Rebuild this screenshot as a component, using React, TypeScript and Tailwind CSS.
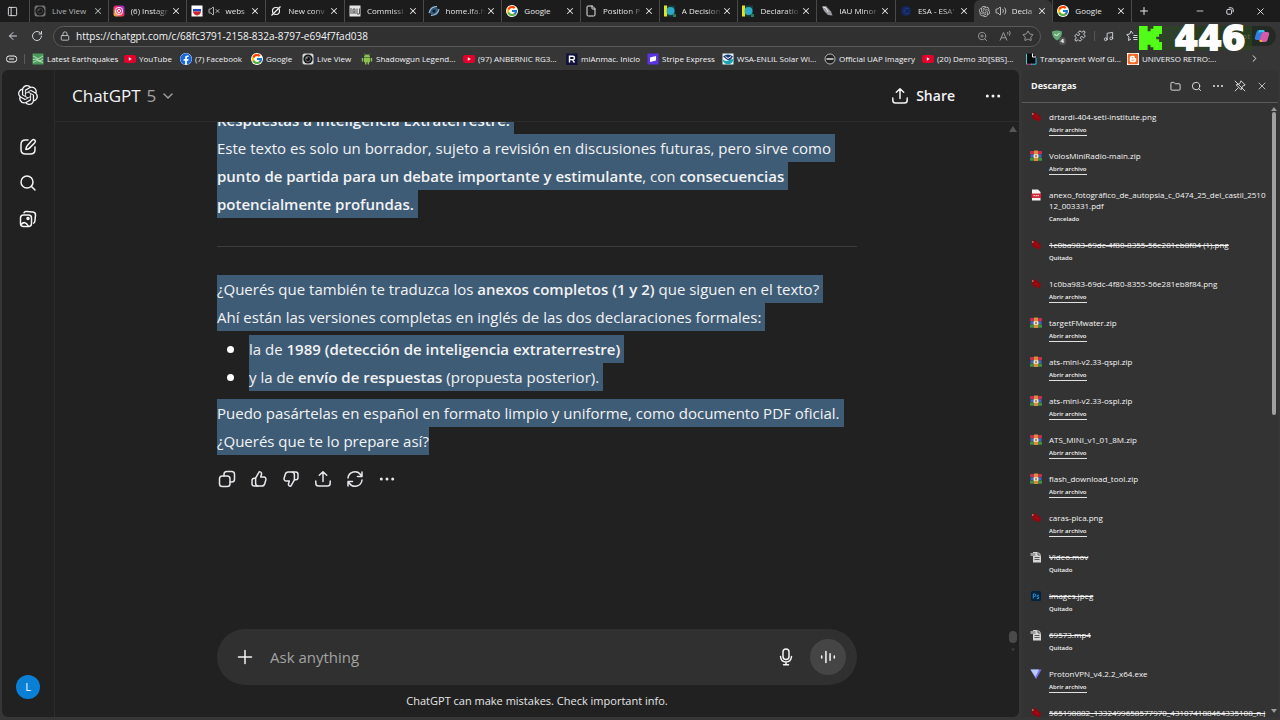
import React from 'react';
import {
  ArrowLeft, RotateCw, Lock, ZoomIn, Star, Search, X, Plus, Minus, ChevronRight, ChevronDown,
  Folder, Puzzle, Music, File as FileIcon, VolumeX, Volume2, PanelLeft,
} from 'lucide-react';
import { SiOpenai } from 'react-icons/si';
import { FcGoogle } from 'react-icons/fc';
import { FaFacebook, FaBlogger } from 'react-icons/fa';

type IconName =
  | 'live' | 'liveDim' | 'instagram' | 'russia' | 'slash' | 'iau' | 'ifa' | 'google' | 'page' | 'decision'
  | 'minor' | 'esa' | 'openai' | 'quake' | 'youtube' | 'facebook' | 'android' | 'anmac' | 'stripe'
  | 'noaa' | 'uap' | 'wolf' | 'blogger' | 'png' | 'zip' | 'pdf' | 'media' | 'ps' | 'vpn';

const svgProps = { viewBox: '0 0 12 12', className: 'size-3 shrink-0', 'aria-hidden': true } as const;

const SiteIcon: React.FC<{ name: IconName }> = ({ name }) => {
  switch (name) {
    case 'google':
      return <FcGoogle className="size-3 shrink-0 rounded-full bg-white" />;
    case 'facebook':
      return <FaFacebook className="size-3 shrink-0 rounded-full bg-white text-[#1668e3]" />;
    case 'blogger':
      return <FaBlogger className="size-3 shrink-0 bg-white text-[#f06a28]" />;
    case 'openai':
      return <SiOpenai className="size-[11px] shrink-0 text-[#c4c4c4]" />;
    case 'page':
      return <FileIcon className="size-3 shrink-0 text-gray-200" strokeWidth={2} />;
    case 'android':
      return (
        <svg {...svgProps}>
          <path d="M3 4.200a3 2.800 0 0 1 6 0zM3 4.700h6v4.600H3zM.8 4.900h1.500v3.600H.8zM9.700 4.900h1.500v3.600H9.700zM4 9h1.400v2.500H4zM6.600 9H8v2.500H6.600z" fill="#8cc152" />
          <path d="m3.500.6.900 1.400M8.500.6 7.600 2" stroke="#8cc152" strokeWidth="0.600" />
        </svg>
      );
    case 'live':
    case 'liveDim':
      return (
        <svg {...svgProps} opacity={name === 'live' ? 1 : 0.45}>
          <rect x="0.5" y="0.5" width="11" height="11" rx="2" fill="#d8d8d8" />
          <circle cx="6" cy="6" r="4.6" fill="#161616" />
          <circle cx="6" cy="6" r="2.6" fill="none" stroke="#5d6a66" strokeWidth="1" />
          <circle cx="4.8" cy="4.8" r="0.9" fill="#a9a9a9" />
        </svg>
      );
    case 'instagram':
      return (
        <svg {...svgProps}>
          <defs>
            <linearGradient id="insta" x1="0" y1="1" x2="1" y2="0">
              <stop offset="0" stopColor="#ffc93d" />
              <stop offset="0.5" stopColor="#ee2a6b" />
              <stop offset="1" stopColor="#8a2be2" />
            </linearGradient>
          </defs>
          <rect x="0.5" y="0.5" width="11" height="11" rx="2.5" fill="url(#insta)" />
          <rect x="2.7" y="2.7" width="6.6" height="6.6" rx="2" fill="none" stroke="#fff" />
          <circle cx="6" cy="6" r="1.6" fill="none" stroke="#fff" />
        </svg>
      );
    case 'russia':
      return (
        <svg {...svgProps}>
          <rect x="0.5" y="0.5" width="11" height="11" fill="#fff" />
          <path d="M2 4h8v2.500H2z" fill="#2347c5" />
          <path d="M2 6.500h8Q9.500 10 6 10.500Q2.500 10 2 6.500z" fill="#d32626" />
        </svg>
      );
    case 'slash':
      return (
        <svg {...svgProps} fill="none" stroke="#f1f1f1" strokeWidth="1.200">
          <circle cx="6" cy="6" r="3.500" />
          <path d="M1.500 10.500 10.500 1.500" />
        </svg>
      );
    case 'iau':
      return (
        <svg {...svgProps}>
          <rect x="0.500" y="0.500" width="11" height="11" fill="#e4e4e4" />
          <path d="M2 3v6M4 9V4h2v5M4 7h2M8 3.500V9h2.500V3.500" fill="none" stroke="#555" />
        </svg>
      );
    case 'ifa':
      return (
        <svg {...svgProps}>
          <circle cx="6" cy="6" r="4.500" fill="#33597c" />
          <path d="M1 8Q3 1 9 1.500M3 10.500Q10 10 11 4" fill="none" stroke="#a9c4da" strokeWidth="1.100" />
          <circle cx="6" cy="6" r="1.500" fill="#0b1a2b" />
        </svg>
      );
    case 'decision':
      return (
        <svg {...svgProps}>
          <rect x="0" y="0.500" width="3" height="11" fill="#e3e51c" />
          <rect x="3" y="0.500" width="8" height="11" fill="#173b40" />
          <circle cx="6.500" cy="6" r="4" fill="#2ba9c9" />
          <path d="M9 9h3v3H9z" fill="#2d7d5a" />
        </svg>
      );
    case 'minor':
      return (
        <svg {...svgProps}>
          <path d="M1 1.500 5 1l5 5.500 1.500 4L7 10 3 6z" fill="#9b9ba3" />
          <path d="m2 2 3 1 2 4" stroke="#e6e6e6" fill="none" />
        </svg>
      );
    case 'esa':
      return (
        <svg {...svgProps}>
          <circle cx="6" cy="6" r="5" fill="#16275e" />
          <path d="M9 3.500Q4 2.500 4 6t5 2.500" fill="none" stroke="#223a80" />
        </svg>
      );
    case 'quake':
      return (
        <svg {...svgProps}>
          <rect x="0.500" y="0.500" width="11" height="11" fill="#4b9a5b" />
          <path d="m1 3 3 1.500L6 6l5-3M1 6.500l3-.5L8 8l3-2M1 9.500l4-2 6 2" fill="none" stroke="#bfe6c4" strokeWidth="0.900" />
        </svg>
      );
    case 'youtube':
      return (
        <svg {...svgProps}>
          <rect x="0" y="2" width="12" height="8" rx="2" fill="#e3002b" />
          <path d="M4.800 4.300v3.400L7.800 6z" fill="#fff" />
        </svg>
      );
    case 'anmac':
      return (
        <svg {...svgProps}>
          <rect x="0" y="0.500" width="11.500" height="11.500" fill="#11123d" />
          <path d="M3.500 9.500V3.300h3.300q1.700 0 1.700 1.600T6.800 6.600H3.500M6.300 6.600l2.200 2.900" fill="none" stroke="#fff" strokeWidth="1.400" />
        </svg>
      );
    case 'stripe':
      return (
        <svg {...svgProps}>
          <rect x="0.500" y="0.500" width="11" height="11" fill="#5a35e0" />
          <path d="m3 4.500 6-1.500v4.500L3 9z" fill="#fff" />
        </svg>
      );
    case 'noaa':
      return (
        <svg {...svgProps}>
          <rect x="0.500" y="0.500" width="11" height="11" fill="#e9f4f7" />
          <path d="M1 3.500Q6-.5 11 3.500L8.500 7h-3z" fill="#1e3a7d" />
          <path d="M1 6.500Q4 9 6 7.500T11 6v2Q9.500 11.300 6 11.300T1 8z" fill="#1aa3b5" />
          <path d="m3.500 3.500 2.500 2 3-2" stroke="#fff" fill="none" />
        </svg>
      );
    case 'uap':
      return (
        <svg {...svgProps} fill="none" stroke="#d4d4d4">
          <circle cx="6" cy="6" r="5" fill="#222" strokeWidth="0.800" />
          <path d="M2.500 6h7" strokeWidth="1.600" />
        </svg>
      );
    case 'wolf':
      return (
        <svg {...svgProps}>
          <path d="M1 .5h6.500L11 4v7.500H1z" fill="#0b0b0b" />
          <path d="M1.500 11.500V.8" stroke="#2fd3d0" />
          <path d="M7.500.5V4H11" stroke="#fff" fill="none" />
          <path d="M2 11.200h5" stroke="#e63b7a" />
          <path d="M6 11.200h5V5" stroke="#35c6e8" fill="none" />
        </svg>
      );
    case 'png':
      return (
        <svg {...svgProps}>
          <path d="M2 2.500q2-1.500 4.500-.5l1.500 2q3 1 3 3L9.500 10.500 6.500 9Q4 9.500 2.500 7z" fill="#94060f" />
          <path d="M5 5q2 .5 3 2.500" stroke="#b7121c" fill="none" />
          <circle cx="2.800" cy="3" r="0.800" fill="#e9a0a0" />
        </svg>
      );
    case 'zip':
      return (
        <svg {...svgProps}>
          <rect x="0" y="1" width="12" height="3" rx="0.500" fill="#c2304f" />
          <rect x="0.500" y="4.300" width="11" height="2.900" fill="#4267c4" />
          <rect x="0" y="7.500" width="12" height="3.200" rx="0.500" fill="#3f8f45" />
          <rect x="4" y="0.500" width="4" height="10.500" fill="#e0893a" />
          <rect x="3.600" y="4.300" width="4.800" height="3.600" fill="#f3e3c0" />
          <path d="M6 5v2.200" stroke="#6b3b17" />
        </svg>
      );
    case 'pdf':
      return (
        <svg {...svgProps}>
          <path d="M2 .5h6L10.500 3v8.500H2z" fill="#f4f4f4" />
          <rect x="1.500" y="4.500" width="9.500" height="4.500" fill="#db2438" />
          <path d="M3.500 6.700h5.500" stroke="#fff" strokeDasharray="1.400 .6" />
        </svg>
      );
    case 'media':
      return (
        <svg {...svgProps}>
          <path d="M3 1h5l3 2.500v8H3z" fill="#d5d5d5" />
          <path d="M.5 2h5v3h-5z" fill="#9a9a9a" />
          <path d="M4.500 6.500h5M4.500 8.500h5M8 1v3h3" stroke="#555" fill="none" />
        </svg>
      );
    case 'ps':
      return (
        <svg {...svgProps}>
          <rect x="1" y="1" width="10" height="10" rx="1.500" fill="#04243d" />
          <path d="M3.300 8.500V4h1.200q1.300 0 1.300 1.200T4.500 6.400h-1M9 5.300Q7 4.800 7 5.900t1 1 .8 1.200T6.800 8.300" fill="none" stroke="#3fa9f5" strokeWidth="0.800" />
        </svg>
      );
    case 'vpn':
      return (
        <svg {...svgProps}>
          <path d="M.5 1.500h11L6.500 10.500q-.5.800-1 0z" fill="#7d6df0" />
          <path d="M.5 1.500h8.500L5.500 9z" fill="#b9cdfb" />
        </svg>
      );
  }
};

const tabs: { icon: IconName; title: string; sound?: 'on' | 'off'; active?: boolean; fade?: boolean; dim?: boolean }[] = [
  { icon: 'liveDim', title: 'Live View', dim: true },
  { icon: 'instagram', title: '(6) Instagr', fade: true },
  { icon: 'russia', title: 'webs', sound: 'off', fade: true },
  { icon: 'slash', title: 'New conv', fade: true },
  { icon: 'iau', title: 'Commissi', fade: true },
  { icon: 'ifa', title: 'home.ifa.h', fade: true },
  { icon: 'google', title: 'Google' },
  { icon: 'page', title: 'Position P', fade: true },
  { icon: 'decision', title: 'A Decision', fade: true },
  { icon: 'decision', title: 'Declaratio', fade: true },
  { icon: 'minor', title: 'IAU Minor', fade: true },
  { icon: 'esa', title: "ESA - ESA'", fade: true },
  { icon: 'openai', title: 'Decla', sound: 'on', active: true, fade: true },
  { icon: 'google', title: 'Google' },
];

const bookmarks: { icon: IconName; title: string; width: string }[] = [
  { icon: 'quake', title: 'Latest Earthquakes', width: 'w-[92px]' },
  { icon: 'youtube', title: 'YouTube', width: 'w-14' },
  { icon: 'facebook', title: '(7) Facebook', width: 'w-[71px]' },
  { icon: 'google', title: 'Google', width: 'w-[51px]' },
  { icon: 'live', title: 'Live View', width: 'w-[59px]' },
  { icon: 'android', title: 'Shadowgun Legend...', width: 'w-[102px]' },
  { icon: 'youtube', title: '(97) ANBERNIC RG3...', width: 'w-[103px]' },
  { icon: 'anmac', title: 'miAnmac. Inicio', width: 'w-[81px]' },
  { icon: 'stripe', title: 'Stripe Express', width: 'w-[75px]' },
  { icon: 'noaa', title: 'WSA-ENLIL Solar Wi...', width: 'w-[102px]' },
  { icon: 'uap', title: 'Official UAP Imagery', width: 'w-[98px]' },
  { icon: 'youtube', title: '(20) Demo 3D[SBS]...', width: 'w-[103px]' },
  { icon: 'wolf', title: 'Transparent Wolf Gl...', width: 'w-[102px]' },
  { icon: 'blogger', title: 'UNIVERSO RETRO:...', width: 'w-[102px]' },
];

const downloads: { icon: IconName; name: string; status: 'open' | 'removed' | 'cancelled' }[] = [
  { icon: 'png', name: 'drtardi-404-seti-institute.png', status: 'open' },
  { icon: 'zip', name: 'VolosMiniRadio-main.zip', status: 'open' },
  { icon: 'pdf', name: 'anexo_fotográfico_de_autopsia_c_0474_25_del_castil_251012_003331.pdf', status: 'cancelled' },
  { icon: 'png', name: '1c0ba983-69dc-4f80-8355-56e281eb8f84 (1).png', status: 'removed' },
  { icon: 'png', name: '1c0ba983-69dc-4f80-8355-56e281eb8f84.png', status: 'open' },
  { icon: 'zip', name: 'targetFMwater.zip', status: 'open' },
  { icon: 'zip', name: 'ats-mini-v2.33-qspi.zip', status: 'open' },
  { icon: 'zip', name: 'ats-mini-v2.33-ospi.zip', status: 'open' },
  { icon: 'zip', name: 'ATS_MINI_v1_01_8M.zip', status: 'open' },
  { icon: 'zip', name: 'flash_download_tool.zip', status: 'open' },
  { icon: 'png', name: 'caras-pica.png', status: 'open' },
  { icon: 'media', name: 'Video.mov', status: 'removed' },
  { icon: 'ps', name: 'images.jpeg', status: 'removed' },
  { icon: 'media', name: '69573.mp4', status: 'removed' },
  { icon: 'vpn', name: 'ProtonVPN_v4.2.2_x64.exe', status: 'open' },
  { icon: 'png', name: '565198882_1332499658577970_431074188464335108_n.jp', status: 'removed' },
];

// 20px stroke icon used all over the chat page
const Glyph: React.FC<{ children: React.ReactNode; className?: string }> = ({ children, className = 'size-5' }) => (
  <svg
    viewBox="0 0 20 20"
    className={className}
    fill="none"
    stroke="currentColor"
    strokeWidth="1.5"
    strokeLinecap="round"
    strokeLinejoin="round"
    aria-hidden
  >
    {children}
  </svg>
);

const ShareGlyph = () => (
  <Glyph>
    <path d="M10 12.500V2.800M6.300 6.300 10 2.700l3.700 3.600M2.800 12v2.300a2.800 2.800 0 0 0 2.800 2.800h8.800a2.800 2.800 0 0 0 2.800-2.800V12" />
  </Glyph>
);

const DotsGlyph = () => (
  <Glyph>
    <g fill="currentColor" stroke="none">
      <circle cx="4.300" cy="10" r="1.500" />
      <circle cx="10" cy="10" r="1.500" />
      <circle cx="15.700" cy="10" r="1.500" />
    </g>
  </Glyph>
);

const thumb = (
  <>
    <path d="M6.600 9.200 9.700 3.600c.3-.6 1-.9 1.600-.7 1 .3 1.500 1.300 1.200 2.300l-.8 2.800h3.100c1.500 0 2.500 1.400 2.100 2.800l-1.200 4c-.4 1.400-1.600 2.300-3 2.300H9.500c-1.600 0-2.900-1.300-2.900-2.900z" />
    <path d="M6.600 9.200H5.300c-1.300 0-2.300 1-2.300 2.300v3.300c0 1.300 1 2.300 2.300 2.300h3.400" />
  </>
);

const Line: React.FC<{ children: React.ReactNode; last?: boolean }> = ({ children, last }) => (
  <span className={`block w-fit whitespace-nowrap bg-[#3f5c77] ${last ? '' : 'pr-1'}`}>{children}</span>
);

const TabStrip = () => (
  <div className="flex h-[22px] items-stretch bg-[#1c1c1c]">
    <button aria-label="Tab actions" className="flex w-[29px] items-center justify-center pr-1 text-gray-200">
      <PanelLeft className="size-[11px]" />
    </button>
    <div className="flex min-w-0 flex-1">
      {tabs.map((tab, i) => (
        <div
          key={i}
          className={`flex min-w-0 flex-1 items-center border-l pl-1 pr-[5px] ${
            tab.active ? 'rounded-t-md border-transparent bg-[#363636]' : 'border-[#4a4a4a]'
          } ${tab.dim ? 'text-[#b5b5b5]' : 'text-[#e8e8e8]'}`}
        >
          <SiteIcon name={tab.icon} />
          {tab.sound === 'off' && <VolumeX className="ml-[5px] size-3 shrink-0" strokeWidth={1.5} />}
          {tab.sound === 'on' && <Volume2 className="ml-[5px] size-3 shrink-0" strokeWidth={1.5} />}
          <span
            className={`min-w-0 flex-1 whitespace-nowrap ${tab.sound ? 'ml-[5px]' : 'ml-1.5'} ${
              tab.fade ? '[mask-image:linear-gradient(to_right,black_60%,transparent)]' : ''
            }`}
          >
            {tab.title}
          </span>
          <button aria-label={`Close ${tab.title}`} className="shrink-0">
            <X className="size-[10px]" strokeWidth={2.5} />
          </button>
        </div>
      ))}
    </div>
    <button aria-label="New tab" className="flex w-[25px] items-center justify-center border-l border-[#4a4a4a] text-gray-200">
      <Plus className="size-3" />
    </button>
    <div className="ml-7 mr-1 flex w-[92px] items-center justify-around text-gray-200">
      <button aria-label="Minimize"><Minus className="size-[10px]" /></button>
      <button aria-label="Restore">
        <svg viewBox="0 0 10 10" className="size-2" fill="none" stroke="currentColor" strokeWidth="1.2">
          <rect x="1" y="3" width="6" height="6" rx="1.500" />
          <path d="M3.500 1h3Q9 1 9 3.500v3" />
        </svg>
      </button>
      <button aria-label="Close window"><X className="size-[11px]" /></button>
    </div>
  </div>
);

const Toolbar = () => (
  <div className="relative flex h-7 items-center bg-[#363636] pr-1 text-gray-300">
    <button aria-label="Back" className="ml-[7px]"><ArrowLeft className="size-3" /></button>
    <button aria-label="Refresh" className="ml-3"><RotateCw className="size-3" /></button>
    <div className="ml-2.5 flex h-[21px] min-w-0 flex-1 items-center rounded-full border border-[#5a5a5a] bg-[#303030] px-1.5">
      <Lock className="size-[10px] shrink-0" />
      <input
        aria-label="Address"
        defaultValue="https://chatgpt.com/c/68fc3791-2158-832a-8797-e694f7fad038"
        className="ml-1.5 min-w-0 flex-1 bg-transparent text-[10px] font-normal text-gray-100 outline-none"
      />
      <div className="flex items-center gap-[11px] text-[#9b9b9b]">
        <button aria-label="Zoom"><ZoomIn className="size-[11px]" /></button>
        <button aria-label="Read aloud">
          <svg viewBox="0 0 12 12" className="size-3" fill="none" stroke="currentColor">
            <path d="m1 10.500 3.500-8 3.500 8M2.200 7.800h4.600M8.500 2q1 1 0 2.500M10.300.8q1.700 2 0 5" />
          </svg>
        </button>
        <button aria-label="Add to favorites"><Star className="size-3" /></button>
      </div>
    </div>
    <div className="ml-[9px] flex w-[226px] items-center">
      <button aria-label="Protection" className="relative flex">
        <svg viewBox="0 0 14 14" className="size-[14px]">
          <path d="M2 2.500Q7 .5 12 2.500q0 6.500-5 9-5-2.500-5-9z" fill="#63a873" />
          <path d="m4.500 5 2 2 3-3" stroke="#fff" fill="none" />
        </svg>
        <span className="absolute -bottom-0.5 -right-0.5 rounded-full bg-[#555] px-0.5 text-[6px] leading-[8px] font-bold text-white">4</span>
      </button>
      <button aria-label="Extensions" className="ml-2.5"><Puzzle className="size-3" /></button>
      <span className="mx-2 h-2.5 border-l border-[#555]" />
      <button aria-label="Media"><Music className="size-[11px]" /></button>
      <button aria-label="Favorites" className="ml-3">
        <svg viewBox="0 0 12 12" className="size-3" fill="none" stroke="currentColor">
          <path d="M7 3.800 5 1 3.800 4 .8 4.500 3 7l-.5 3.500L5 9M7.500 5.500h4M7 7.500h4.500M7.500 9.500h4" />
        </svg>
      </button>
      <div className="ml-auto flex h-5 w-24 items-center justify-end gap-1 rounded-full bg-[#232923] pr-1.5">
        <span className="text-gray-400">pilot</span>
        <svg viewBox="0 0 16 14" className="h-[14px] w-4">
          <path d="M5 1h4q2 0 1.500 2L8.500 9Q8 11 6 11H3Q0 11 1 8l1.500-5Q3 1 5 1z" fill="#2f7fe0" />
          <path d="M10 3h3q3 0 2 3l-1.500 5q-.5 2-2.500 2H7q-2 0-1.500-2L7.500 5Q8 3 10 3z" fill="#d55aa8" />
          <path d="M5 1h4q2 0 1.500 2H7Q5 3 4.500 5z" fill="#35c6e8" />
          <path d="M5.500 11h3l-.5 2H7q-2 0-1.500-2z" fill="#f3a545" />
        </svg>
      </div>
    </div>
    {/* stream counter floating above the browser */}
    <div className="pointer-events-none absolute right-7 top-1 z-10 flex h-6 items-center gap-1.5 bg-[#2b4a22]/60">
      <svg viewBox="1.333 0 21.334 24" className="h-6 w-[23px] text-[#53fc18]" preserveAspectRatio="none" aria-label="Kick">
        <path
          fill="currentColor"
          d="M1.333 0h8v5.333H12V2.667h2.667V0h8v8H20v2.667h-2.667v2.666H20V16h2.667v8h-8v-2.667H12v-2.666H9.333V24h-8Z"
        />
      </svg>
      <span className="w-[84px] text-center font-['DejaVu_Sans',sans-serif] text-[34px] leading-6 font-bold text-white [-webkit-text-stroke:2px_white]">
        446
      </span>
    </div>
  </div>
);

const BookmarksBar = () => (
  <div className="flex h-5 items-center bg-[#363636] pb-[3px] pl-[6px] text-gray-100">
    <svg viewBox="0 0 12 10" className="h-2.5 w-3 shrink-0" fill="none" stroke="currentColor">
      <rect x="0.600" y="2" width="10" height="6" rx="2.500" />
      <path d="M3 5h5" />
    </svg>
    <span className="ml-1.5 mr-[7px] h-2.5 border-l border-[#5a5a5a]" />
    {bookmarks.map((b, i) => (
      <a key={i} href="#" className={`flex shrink-0 items-center gap-[3px] whitespace-nowrap ${b.width}`}>
        <SiteIcon name={b.icon} />
        {b.title}
      </a>
    ))}
    <button aria-label="More bookmarks" className="ml-auto mr-5"><ChevronRight className="size-[11px]" /></button>
  </div>
);

const ChatSidebar = () => (
  <nav className="flex w-[53px] shrink-0 flex-col items-center border-r border-[#2c2c2c] text-gray-100">
    <a href="#" aria-label="ChatGPT" className="mt-[15px]"><SiOpenai className="size-5" /></a>
    <div className="mt-8 flex flex-col gap-4">
      <button aria-label="New chat">
        <Glyph>
          <path d="M10 3H7.500Q3 3 3 7.500v5Q3 17 7.500 17h5q4.500 0 4.500-4.500V10" />
          <path d="M14.100 3.200a1.800 1.800 0 0 1 2.700 2.600l-5.300 5.300q-1.200 1.200-3.600 1.300.1-2.400 1.300-3.600z" />
        </Glyph>
      </button>
      <button aria-label="Search chats">
        <Glyph>
          <circle cx="9" cy="9" r="6" />
          <path d="m13.500 13.500 3.500 3.500" />
        </Glyph>
      </button>
      <button aria-label="Library">
        <Glyph>
          <rect x="2.500" y="6" width="11" height="11.500" rx="3" />
          <path d="M6 3.800Q6.500 2.300 8.500 2.500l6.500.6q2.700.3 2.500 3l-.6 6q-.2 1.500-1.200 2M3 15.500q4-4.500 7.500 1.800" />
          <circle cx="10" cy="9.500" r="1" fill="currentColor" />
        </Glyph>
      </button>
    </div>
    <button aria-label="Account" className="mb-[18px] mt-auto size-6 rounded-full bg-[#0a7fd6] text-[11px] text-white">
      L
    </button>
  </nav>
);

const Conversation = () => (
  <article className="mx-auto w-[640px] text-[15px] leading-7 text-[#f3f3f3]">
    <p className="-mt-4">
      <Line><b className="font-semibold">Respuestas a Inteligencia Extraterrestre.</b></Line>
      <Line>Este texto es solo un borrador, sujeto a revisión en discusiones futuras, pero sirve como</Line>
      <Line>
        <b className="font-semibold">punto de partida para un debate importante y estimulante</b>, con{' '}
        <b className="font-semibold">consecuencias</b>
      </Line>
      <Line><b className="font-semibold">potencialmente profundas.</b></Line>
    </p>
    <hr className="my-7 border-[#3d3d3d]" />
    <p>
      <Line>
        ¿Querés que también te traduzca los <b className="font-semibold">anexos completos (1 y 2)</b> que siguen en el texto?
      </Line>
      <Line>Ahí están las versiones completas en inglés de las dos declaraciones formales:</Line>
    </p>
    <ul className="mb-2 mt-1">
      <li className="flex items-center">
        <span className="ml-2.5 mr-[15px] size-[7px] rounded-full bg-white" />
        <Line>
          la de <b className="font-semibold">1989 (detección de inteligencia extraterrestre)</b>
        </Line>
      </li>
      <li className="flex items-center">
        <span className="ml-2.5 mr-[15px] size-[7px] rounded-full bg-white" />
        <Line>
          y la de <b className="font-semibold">envío de respuestas</b> (propuesta posterior).
        </Line>
      </li>
    </ul>
    <p>
      <Line>Puedo pasártelas en español en formato limpio y uniforme, como documento PDF oficial.</Line>
      <Line last>¿Querés que te lo prepare así?</Line>
    </p>
    <div className="mt-3.5 flex gap-3 text-gray-200">
      <button aria-label="Copy">
        <Glyph>
          <rect x="2.500" y="7" width="10.500" height="10.500" rx="2.800" />
          <path d="M7 7V5.300q0-2.800 2.800-2.800h4.900q2.800 0 2.800 2.800v4.900q0 2.800-2.800 2.800H13" />
        </Glyph>
      </button>
      <button aria-label="Good response"><Glyph>{thumb}</Glyph></button>
      <button aria-label="Bad response"><Glyph className="size-5 rotate-180">{thumb}</Glyph></button>
      <button aria-label="Share"><ShareGlyph /></button>
      <button aria-label="Try again">
        <Glyph>
          <path d="M3 9a7 7 0 0 1 12.700-3.300L17 7.500M17 3v4.500h-4.500M17 11a7 7 0 0 1-12.700 3.300L3 12.500M3 17v-4.500h4.500" />
        </Glyph>
      </button>
      <button aria-label="More actions"><DotsGlyph /></button>
    </div>
  </article>
);

const Composer = () => (
  <div className="mx-auto w-[640px]">
    <form className="flex h-14 items-center rounded-full bg-[#303030] pl-[18px] pr-[11px] text-gray-100">
      <button type="button" aria-label="Add files"><Glyph><path d="M10 3.500v13M3.500 10h13" /></Glyph></button>
      <input
        aria-label="Ask anything"
        placeholder="Ask anything"
        className="ml-[15px] min-w-0 flex-1 bg-transparent text-[15px] outline-none placeholder:text-[#a3a3a3]"
      />
      <button type="button" aria-label="Dictate" className="mr-3.5">
        <Glyph>
          <rect x="7" y="2" width="6" height="10.500" rx="3" />
          <path d="M4.500 9.500Q5 15 10 15t5.500-5.500M10 15v2.500M7.500 17.700h5" />
        </Glyph>
      </button>
      <button type="button" aria-label="Voice mode" className="flex size-9 items-center justify-center rounded-full bg-[#454545]">
        <Glyph className="size-[18px]"><path d="M3 9v2M7.700 4v12M12.300 6.500v7M17 8.800v2.400" strokeWidth="1.700" /></Glyph>
      </button>
    </form>
    <p className="flex h-8 items-center justify-center text-[11px] text-[#e6e6e6]">
      ChatGPT can make mistakes. Check important info.
    </p>
  </div>
);

const DownloadsPanel = () => (
  <aside className="ml-[3px] flex w-64 shrink-0 flex-col bg-[#333333] text-[#f5f5f5]">
    <header className="flex h-[33px] shrink-0 items-center border-b border-[#5c5c5c] pl-[9px] pr-2.5">
      <h2 className="flex-1 text-[9px] font-bold">Descargas</h2>
      <div className="flex items-center gap-[10px] text-gray-200">
        <button aria-label="Open folder"><Folder className="size-[11px]" /></button>
        <button aria-label="Search downloads"><Search className="size-[11px]" /></button>
        <button aria-label="More options">
          <svg viewBox="0 0 12 12" className="size-3" fill="currentColor">
            <circle cx="2" cy="6" r="1" />
            <circle cx="6" cy="6" r="1" />
            <circle cx="10" cy="6" r="1" />
          </svg>
        </button>
        <button aria-label="Unpin">
          <svg viewBox="0 0 12 12" className="size-3" fill="none" stroke="currentColor" strokeWidth="0.900">
            <path d="m7 .8 4.200 4.200-2.800 1.200-1.200 3.600L2.200 4.800 5.800 3.600zM4.500 7.500.8 11.200M.8.8l10.400 10.400" />
          </svg>
        </button>
        <button aria-label="Close panel"><X className="size-3" strokeWidth={1.5} /></button>
      </div>
    </header>
    <div className="flex min-h-0 flex-1">
      <ul className="min-w-0 flex-1 overflow-hidden pl-2 pt-2">
        {downloads.map((d) => (
          <li key={d.name} className="mb-3.5 flex gap-[7px] last:mb-0">
            <SiteIcon name={d.icon} />
            <div className="min-w-0 flex-1">
              <p className={`text-[8px] leading-[11px] font-normal break-all ${d.status === 'removed' ? 'line-through' : ''}`}>
                {d.name}
              </p>
              <div className="flex h-3.5 items-end text-[6px] leading-[10px] font-semibold">
                {d.status === 'open' ? (
                  <a href="#" className="border-b border-[#e0e0e0]">Abrir archivo</a>
                ) : (
                  <span className="pb-px">{d.status === 'removed' ? 'Quitado' : 'Cancelado'}</span>
                )}
              </div>
            </div>
          </li>
        ))}
      </ul>
      <div className="flex w-2 shrink-0 flex-col items-center py-1">
        <svg viewBox="0 0 6 4" className="h-1 w-1.5"><path d="M3 0l3 4H0z" fill="#9a9a9a" /></svg>
        <div className="mt-px h-1/2 w-1 rounded-full bg-[#a0a0a0]" />
        <svg viewBox="0 0 6 4" className="mt-auto h-1 w-1.5"><path d="M0 0h6L3 4z" fill="#9a9a9a" /></svg>
      </div>
    </div>
  </aside>
);

const App: React.FC = () => (
  <div className="flex h-screen flex-col overflow-hidden bg-[#363636] font-['Open_Sans','Noto_Sans',sans-serif] text-[8px] font-medium">
    <TabStrip />
    <Toolbar />
    <BookmarksBar />
    <div className="mb-[3px] flex min-h-0 flex-1 px-0.5">
      <div className="flex min-w-0 flex-1 overflow-hidden rounded-md bg-[#212121] font-normal">
        <ChatSidebar />
        <main className="relative flex min-w-0 flex-1 flex-col">
          <header className="flex h-[52px] shrink-0 items-center border-b border-[#2c2c2c] pl-[17px] pr-4 text-gray-100">
            <button className="flex items-center text-[17px]">
              ChatGPT <span className="ml-1.5 text-[#a3a3a3]">5</span>
              <ChevronDown className="ml-1 size-4 text-[#a3a3a3]" />
            </button>
            <button className="ml-auto flex items-center gap-1.5 text-sm font-semibold"><ShareGlyph /> Share</button>
            <button aria-label="More" className="ml-7"><DotsGlyph /></button>
          </header>
          <div className="min-h-0 flex-1 overflow-hidden">
            <Conversation />
          </div>
          <Composer />
          {/* scrollbar */}
          <div className="absolute bottom-16 right-0.5 top-14 flex w-2 flex-col items-center">
            <svg viewBox="0 0 8 6" className="h-1.5 w-2"><path d="M4 0l4 6H0z" fill="#555" /></svg>
            <span className="mb-1 mt-auto h-3 w-2 rounded-full bg-[#4a4a4a]" />
            <svg viewBox="0 0 8 6" className="h-1.5 w-1"><path d="M0 0h8L4 6z" fill="#3c3c3c" /></svg>
          </div>
        </main>
      </div>
      <DownloadsPanel />
    </div>
  </div>
);

export default App;
